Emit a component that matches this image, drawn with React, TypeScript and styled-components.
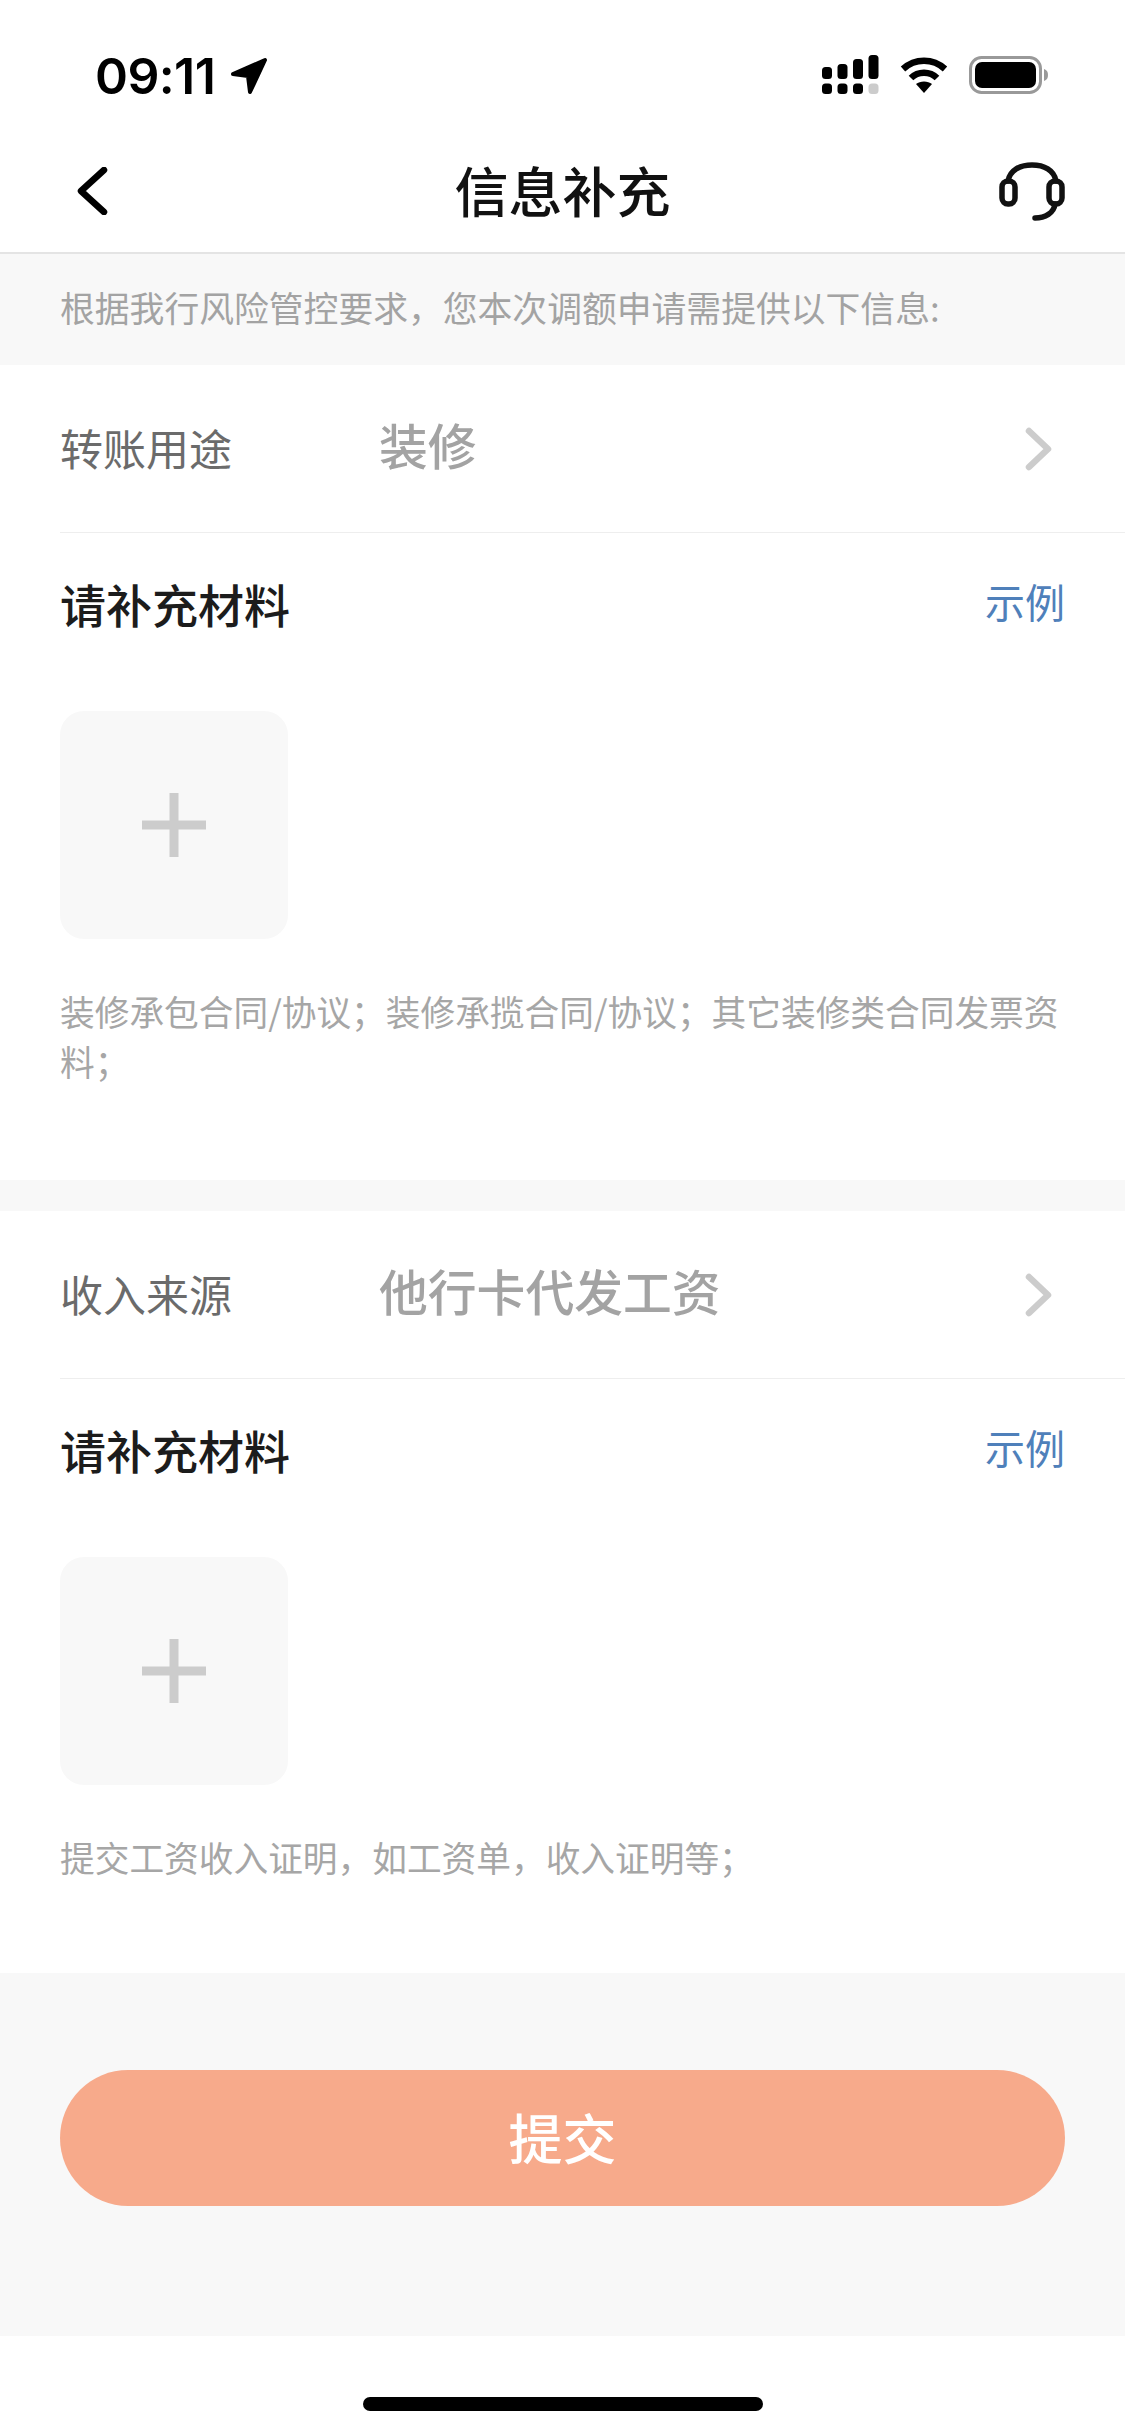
import React from "react";
import styled, { createGlobalStyle } from "styled-components";

const GlobalStyle = createGlobalStyle`
  html, body {
    margin: 0;
    padding: 0;
    background: #fff;
  }
  * {
    box-sizing: border-box;
  }
`;

const Page = styled.div`
  width: 1125px;
  height: 2435px;
  display: flex;
  flex-direction: column;
  background: #fff;
  font-family: "Noto Sans CJK SC", "Noto Sans", sans-serif;
  overflow: hidden;
`;

const StatusBar = styled.div`
  height: 130px;
  flex: none;
  display: flex;
  align-items: flex-start;
  justify-content: space-between;
  padding: 55px 76px 0 95px;
`;

const StatusLeft = styled.div`
  display: flex;
  align-items: center;
  gap: 15px;
`;

const Clock = styled.span`
  font-family: Inter, "Liberation Sans", sans-serif;
  font-size: 50px;
  font-weight: 600;
  line-height: 42px;
  letter-spacing: -0.6px;
  color: #000;
`;

const StatusRight = styled.div`
  display: flex;
  align-items: center;
  gap: 21px;
`;

const NavBar = styled.header`
  height: 124px;
  flex: none;
  display: grid;
  grid-template-columns: 1fr auto 1fr;
  align-items: center;
  padding: 0 60px;
  border-bottom: 2px solid #e4e4e4;
`;

const NavTitle = styled.h1`
  margin: 0 0 3px;
  font-size: 54px;
  font-weight: 500;
  line-height: 70px;
  color: #111;
`;

const NavLeft = styled.div`
  display: flex;
  padding-left: 17px;
`;

const NavRight = styled.div`
  display: flex;
  justify-content: flex-end;
`;

const Notice = styled.div`
  height: 111px;
  flex: none;
  display: flex;
  align-items: center;
  padding: 0 60px 6px;
  background: #f8f8f8;
  font-size: 34.8px;
  color: #a3a3a3;
`;

const Section = styled.section<{ $end: number }>`
  flex: none;
  background: #fff;
  padding-bottom: ${({ $end }) => $end}px;
`;

const Divider = styled.div`
  height: 31px;
  flex: none;
  background: #f8f8f8;
`;

const PickerRow = styled.div`
  height: 168px;
  margin-left: 60px;
  padding-right: 72px;
  display: flex;
  align-items: center;
  border-bottom: 1px solid #eee;
`;

const PickerLabel = styled.span`
  width: 319px;
  font-size: 43px;
  line-height: 60px;
  padding-bottom: 4px;
  color: #6b6b6b;
`;

const PickerValue = styled.span`
  flex: 1;
  font-size: 48.8px;
  font-weight: 500;
  line-height: 60px;
  padding-bottom: 10px;
  color: #a3a3a3;
`;

const MaterialHead = styled.div`
  height: 146px;
  padding: 0 60px 7px;
  display: flex;
  align-items: center;
  justify-content: space-between;
`;

const MaterialTitle = styled.span`
  font-size: 46px;
  font-weight: 500;
  line-height: 60px;
  color: #1c1c1c;
`;

const ExampleLink = styled.a`
  font-size: 40px;
  line-height: 60px;
  padding-bottom: 4px;
  color: #4f80ba;
`;

const UploadBox = styled.button`
  display: flex;
  align-items: center;
  justify-content: center;
  width: 228px;
  height: 228px;
  margin: 32px 0 0 60px;
  padding: 0;
  border: none;
  border-radius: 24px;
  background: #f8f8f8;
`;

const Hint = styled.p`
  margin: 47px 0 0;
  padding: 0 60px;
  font-size: 34.7px;
  line-height: 50px;
  color: #a6a6a6;
`;

const Footer = styled.div`
  flex: 1;
  padding: 97px 60px 130px;
  background: #f8f8f8;
`;

const SubmitButton = styled.button`
  display: block;
  width: 100%;
  height: 136px;
  padding: 0 0 4px;
  border: none;
  border-radius: 68px;
  background: #f7aa8b;
  font-family: inherit;
  font-size: 54px;
  font-weight: 500;
  color: #fff;
`;

const HomeArea = styled.div`
  height: 99px;
  flex: none;
  display: flex;
  justify-content: center;
  padding-top: 61px;
  background: #fff;
`;

const HomeBar = styled.div`
  width: 400px;
  height: 14px;
  border-radius: 7px;
  background: #000;
`;

const LocationArrow = () => (
  <svg width="38" height="38" viewBox="0 0 38 38" aria-hidden="true">
    <path
      d="M3 17 L35 3 L20 35 L18 19 Z"
      fill="#000"
      stroke="#000"
      strokeWidth="4"
      strokeLinejoin="round"
    />
  </svg>
);

const SignalIcon = () => (
  <svg width="57" height="40" viewBox="0 0 57 40" aria-hidden="true">
    <rect x="0" y="12" width="10" height="12" rx="3.5" fill="#000" />
    <rect x="15.5" y="9" width="10" height="15" rx="3.5" fill="#000" />
    <rect x="31" y="4" width="10" height="20" rx="3.5" fill="#000" />
    <rect x="46.5" y="0" width="10" height="24" rx="3.5" fill="#000" />
    <rect x="0" y="28.5" width="10" height="10.5" rx="3.5" fill="#000" />
    <rect x="15.5" y="28.5" width="10" height="10.5" rx="3.5" fill="#000" />
    <rect x="31" y="28.5" width="10" height="10.5" rx="3.5" fill="#000" />
    <rect x="46.5" y="28.5" width="10" height="10.5" rx="3.5" fill="#ccc" />
  </svg>
);

const WifiIcon = () => (
  <svg width="48" height="37" viewBox="0 0 48 37" aria-hidden="true">
    <path d="M3 12 C15 1 33 1 45 12" fill="none" stroke="#000" strokeWidth="6.5" />
    <path d="M11 21 C18 14 30 14 37 21" fill="none" stroke="#000" strokeWidth="6.5" />
    <path d="M16 27 C20 23.5 28 23.5 32 27 L24 36 Z" fill="#000" />
  </svg>
);

const BatteryIcon = () => (
  <svg width="80" height="38" viewBox="0 0 80 38" aria-hidden="true">
    <rect x="1.5" y="1.5" width="70" height="35" rx="11" fill="none" stroke="#999" strokeWidth="3" />
    <rect x="6" y="6" width="61" height="26" rx="7" fill="#000" />
    <path d="M75 13 C78 14 79 16 79 19 C79 22 78 24 75 25 Z" fill="#999" />
  </svg>
);

const BackIcon = () => (
  <svg width="32" height="48" viewBox="0 0 32 48" aria-hidden="true">
    <path
      d="M27 3 L4 24 L27 45"
      fill="none"
      stroke="#000"
      strokeWidth="6.5"
      strokeLinecap="round"
      strokeLinejoin="round"
    />
  </svg>
);

const HeadsetIcon = () => (
  <svg width="66" height="60" viewBox="0 0 66 60" aria-hidden="true">
    <g fill="none" stroke="#111" strokeWidth="5.5" strokeLinecap="round">
      <rect x="3" y="20" width="13" height="23" rx="6" />
      <rect x="50" y="20" width="13" height="23" rx="6" />
      <path d="M9 20 C11 9 21 4 33 4 S55 9 57 20" />
      <path d="M56 43 C55 52 46 57 36 57" />
    </g>
  </svg>
);

const Chevron = () => (
  <svg width="28" height="44" viewBox="0 0 28 44" aria-hidden="true">
    <path
      d="M4 4 L23 22 L4 40"
      fill="none"
      stroke="#ccc"
      strokeWidth="6.5"
      strokeLinecap="round"
      strokeLinejoin="round"
    />
  </svg>
);

const PlusIcon = () => (
  <svg width="64" height="64" viewBox="0 0 64 64" aria-hidden="true">
    <rect x="27.5" y="0" width="9" height="64" fill="#ccc" />
    <rect x="0" y="27.5" width="64" height="9" fill="#ccc" />
  </svg>
);

interface IMaterialSectionProps {
  label: string;
  value: string;
  hint: string;
  end: number;
}

const MaterialSection: React.FC<IMaterialSectionProps> = ({ label, value, hint, end }) => (
  <Section $end={end}>
    <PickerRow>
      <PickerLabel>{label}</PickerLabel>
      <PickerValue>{value}</PickerValue>
      <Chevron />
    </PickerRow>
    <MaterialHead>
      <MaterialTitle>请补充材料</MaterialTitle>
      <ExampleLink>示例</ExampleLink>
    </MaterialHead>
    <UploadBox type="button" aria-label="上传">
      <PlusIcon />
    </UploadBox>
    <Hint>{hint}</Hint>
  </Section>
);

export default function App() {
  return (
    <Page>
      <GlobalStyle />
      <StatusBar>
        <StatusLeft>
          <Clock>09:11</Clock>
          <LocationArrow />
        </StatusLeft>
        <StatusRight>
          <SignalIcon />
          <WifiIcon />
          <BatteryIcon />
        </StatusRight>
      </StatusBar>
      <NavBar>
        <NavLeft>
          <BackIcon />
        </NavLeft>
        <NavTitle>信息补充</NavTitle>
        <NavRight>
          <HeadsetIcon />
        </NavRight>
      </NavBar>
      <Notice>根据我行风险管控要求，您本次调额申请需提供以下信息:</Notice>
      <MaterialSection
        label="转账用途"
        value="装修"
        hint="装修承包合同/协议；装修承揽合同/协议；其它装修类合同发票资料；"
        end={94}
      />
      <Divider />
      <MaterialSection
        label="收入来源"
        value="他行卡代发工资"
        hint="提交工资收入证明，如工资单，收入证明等；"
        end={91}
      />
      <Footer>
        <SubmitButton type="button">提交</SubmitButton>
      </Footer>
      <HomeArea>
        <HomeBar />
      </HomeArea>
    </Page>
  );
}
